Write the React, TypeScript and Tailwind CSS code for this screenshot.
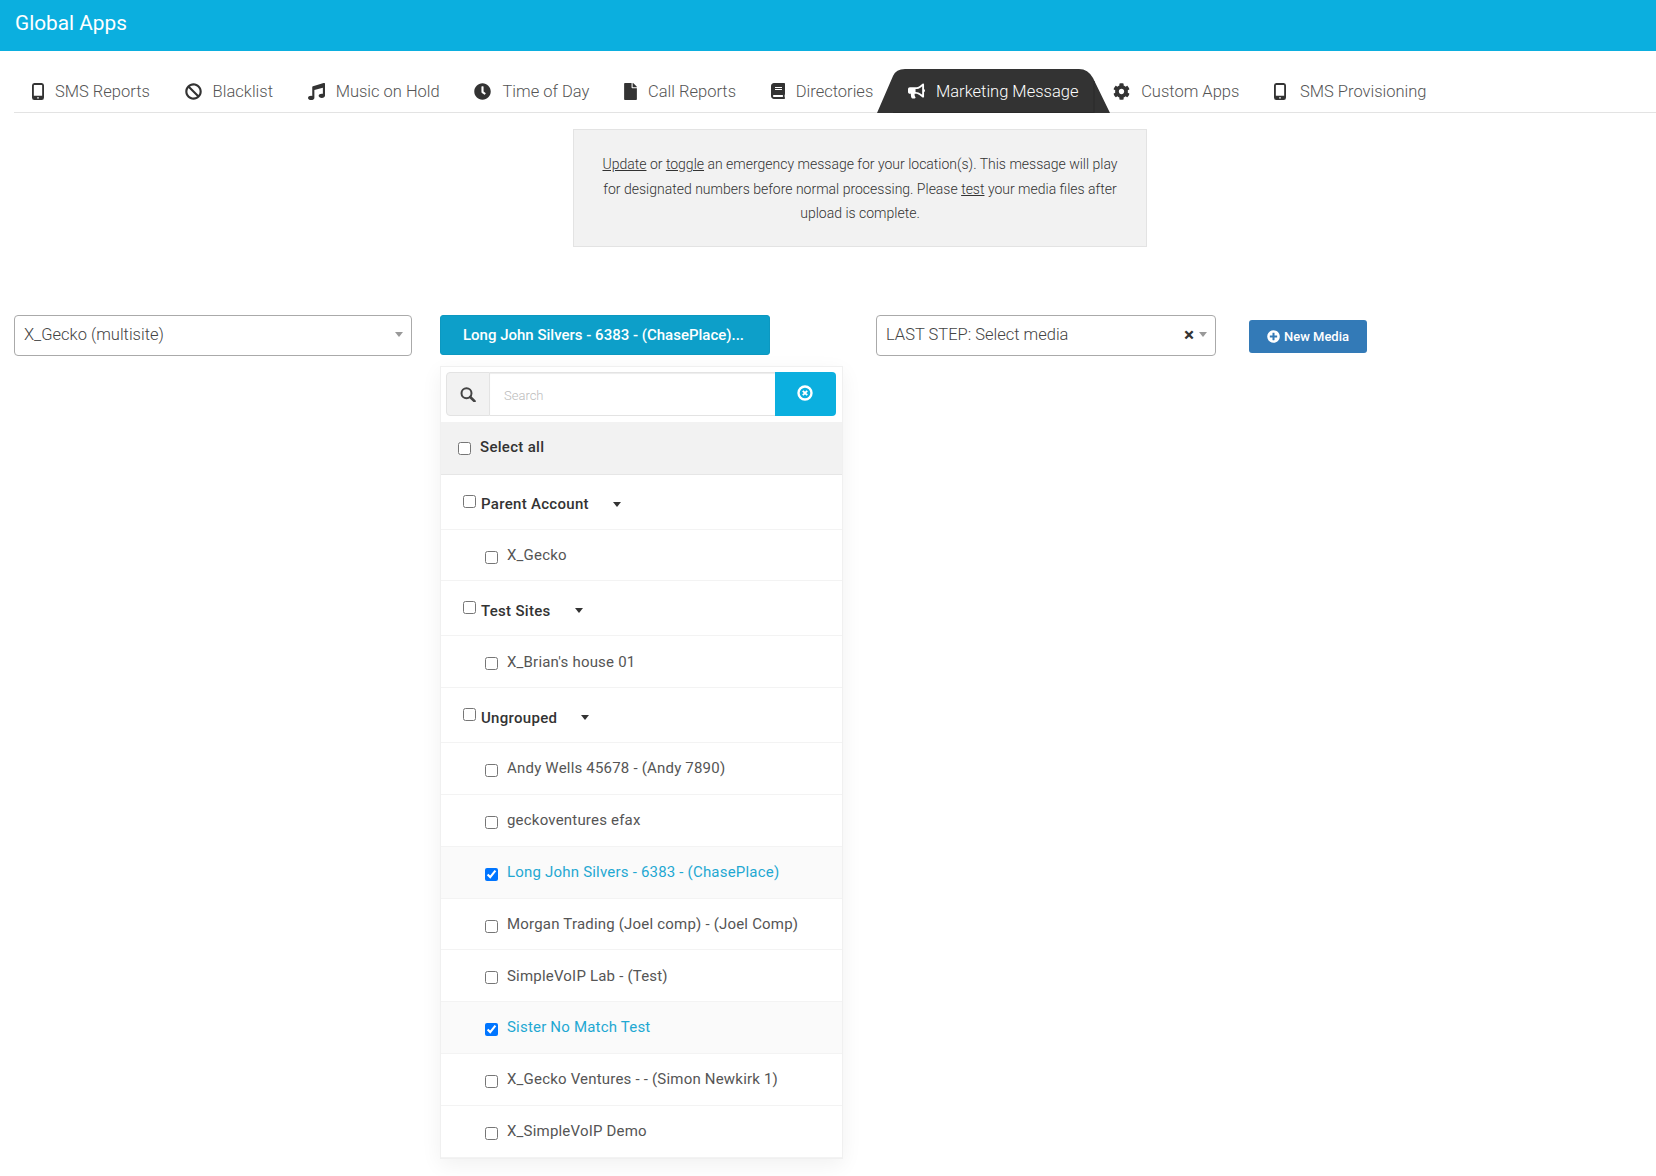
import React from 'react';
import { FaBan, FaMusic, FaClock, FaFile, FaBook, FaBullhorn, FaCog, FaPlusCircle } from 'react-icons/fa';

const MobileIcon = () => (
  <svg viewBox="0 0 13 17" className="w-[12px] h-[17px]" fill="currentColor" preserveAspectRatio="none">
    <path fillRule="evenodd" d="M2.5 0h8A2.5 2.5 0 0 1 13 2.500v12a2.500 2.500 0 0 1-2.500 2.500h-8A2.500 2.500 0 0 1 0 14.500v-12A2.500 2.500 0 0 1 2.500 0zM2 2.500v10.300h9V2.500a.5.5 0 0 0-.5-.5h-8a.5.5 0 0 0-.5.5z" />
    <circle cx="6.500" cy="14.800" r="0.900" fill="#fff" />
  </svg>
);

const SearchIcon = () => (
  <svg viewBox="0 0 16 15" className="w-[16px] h-[15px]" fill="none" stroke="currentColor">
    <circle cx="6.500" cy="6.300" r="5" strokeWidth="2" />
    <path d="M10.200 10l4.300 4.200" strokeWidth="2.600" strokeLinecap="round" />
  </svg>
);

const ClearIcon = () => (
  <svg viewBox="0 0 16 16" className="w-[16px] h-[16px]" fill="none" stroke="currentColor">
    <circle cx="8" cy="8" r="6.500" strokeWidth="2.400" />
    <path d="M5.800 5.800l4.400 4.400M10.200 5.800l-4.400 4.400" strokeWidth="1.900" />
  </svg>
);

const tabs = [
  { label: 'SMS Reports', icon: <MobileIcon /> },
  { label: 'Blacklist', icon: <FaBan className="w-[17px] h-[17px]" /> },
  { label: 'Music on Hold', icon: <FaMusic className="w-[17px] h-[17px]" /> },
  { label: 'Time of Day', icon: <FaClock className="w-[17px] h-[17px]" /> },
  { label: 'Call Reports', icon: <FaFile className="w-[13px] h-[17px]" /> },
  { label: 'Directories', icon: <FaBook className="w-[14px] h-[16px]" /> },
  { label: 'Marketing Message', icon: <FaBullhorn className="w-[17px] h-[16px]" />, active: true },
  { label: 'Custom Apps', icon: <FaCog className="w-[17px] h-[17px]" /> },
  { label: 'SMS Provisioning', icon: <MobileIcon />, wide: true },
];

const Caret = ({ className = '' }: { className?: string }) => (
  <span className={`inline-block w-0 h-0 border-x-[4px] border-x-transparent border-t-[5px] ${className}`} />
);

const Row = ({ label, checked }: { label: string; checked?: boolean }) => (
  <div className={`h-[51.8px] flex items-center pl-[44px] border-b border-[#f3f3f3] ${checked ? 'bg-[#fafafa] text-[#1fa8d2]' : 'text-[#555]'}`}>
    <input type="checkbox" checked={!!checked} readOnly className="mt-[4px]" />
    <span className="ml-[9px] text-[15px] tracking-[0.2px]">{label}</span>
  </div>
);

const Group = ({ label }: { label: string }) => (
  <div className="h-[55px] flex items-center pl-[22px] border-b border-[#f3f3f3] text-[#333]">
    <input type="checkbox" readOnly className="-mt-[1px]" />
    <span className="ml-[5px] mt-[5px] text-[15px] font-medium tracking-[0.3px]">{label}</span>
    <Caret className="border-t-[#333] mt-[5px] ml-[24px]" />
  </div>
);

export default function App() {
  return (
    <div className="min-h-[1176px] bg-white font-['Roboto',sans-serif] text-[#555] overflow-hidden">
      <header className="h-[51px] bg-[#0bafdf] flex items-start pl-[15px] pt-[9px]">
        <span className="text-[20.8px] text-white leading-[28px] font-normal">Global Apps</span>
      </header>

      <nav className="ml-[14px] mt-[18px] h-[44px] border-b border-[#e3e3e3] flex items-start pl-[18px] gap-[34.7px]">
        {tabs.map(t => (
          <div key={t.label} className={`relative h-[43px] pt-[1px] flex items-center text-[16.5px] font-light ${t.wide ? 'gap-[14px]' : 'gap-[11px]'} ${t.active ? 'text-white' : 'text-[#555]'}`}>
            {t.active && (
              <svg className="absolute top-0 -left-[32px] h-[44px] w-[234px]" viewBox="0 0 234 44">
                <path d="M1 44 L17 7 Q20 0 29 0 L203 0 Q212 0 217 9 L234 44 Z" fill="#333" />
                <path d="M17 43.500H218M218 12V44" stroke="#2a2a2a" strokeWidth="1" fill="none" />
              </svg>
            )}
            <span className={`relative ${t.active ? 'text-white' : 'text-[#333]'}`}>{t.icon}</span>
            <span className="relative mt-[2px]">{t.label}</span>
          </div>
        ))}
      </nav>

      <div className="ml-[573px] mt-[16px] w-[574px] h-[118px] bg-[#f2f2f2] border border-[#e3e3e3] flex items-center justify-center text-center px-[21px] pt-[2px] text-[14px] leading-[24.5px] font-light text-[#333]">
        <p>
          <u>Update</u> or <u>toggle</u> an emergency message for your location(s). This message will play for designated numbers before normal processing. Please <u>test</u> your media files after upload is complete.
        </p>
      </div>

      <div className="mt-[68px] ml-[14px] flex items-start">
        <div className="w-[398px] h-[41px] border border-[#aaa] rounded-[4px] flex items-center pl-[9px] pr-[8px] text-[16.5px] font-light text-[#444]">
          <span className="flex-1">X_Gecko (multisite)</span>
          <Caret className="border-t-[#999] -mt-[2px]" />
        </div>

        <div className="ml-[28px] w-[403px]">
          <div className="w-[330px] h-[40px] bg-[#0d9fc9] border border-[#0c98c0] rounded-[3px] flex items-center justify-center pr-[3px] text-white text-[15px] font-medium">
            Long John Silvers - 6383 - (ChasePlace)...
          </div>
          <div className="mt-[11px] bg-white border border-[#f0f0f0] shadow-[0_6px_20px_rgba(0,0,0,0.06)]">
            <div className="pt-[5px] pl-[5px] pr-[6px] pb-[6px]">
              <div className="flex h-[44px]">
                <div className="w-[44px] bg-[#f2f2f2] border border-[#e3e3e3] rounded-l-[4px] flex items-center justify-center text-[#444]">
                  <SearchIcon />
                </div>
                <div className="flex-1 flex items-center pl-[14px] pt-[3px] border-y border-[#e3e3e3] shadow-[inset_0_1px_1px_rgba(0,0,0,0.075)] text-[13px] font-light text-[#bbb]">Search</div>
                <div className="w-[61px] bg-[#0bafdf] rounded-r-[4px] flex justify-center pt-[13px] pr-[2px] text-white">
                  <ClearIcon />
                </div>
              </div>
            </div>
            <div className="h-[52.7px] bg-[#f2f2f2] border-b border-[#e6e6e6] flex items-center pl-[17px] text-[#333]">
              <input type="checkbox" readOnly className="mt-[1px]" />
              <span className="ml-[9px] -mt-[1px] text-[15px] font-medium tracking-[0.3px]">Select all</span>
            </div>
            <Group label="Parent Account" />
            <Row label="X_Gecko" />
            <Group label="Test Sites" />
            <Row label="X_Brian's house 01" />
            <Group label="Ungrouped" />
            <Row label="Andy Wells 45678 - (Andy 7890)" />
            <Row label="geckoventures efax" />
            <Row label="Long John Silvers - 6383 - (ChasePlace)" checked />
            <Row label="Morgan Trading (Joel comp) - (Joel Comp)" />
            <Row label="SimpleVoIP Lab - (Test)" />
            <Row label="Sister No Match Test" checked />
            <Row label="X_Gecko Ventures - - (Simon Newkirk 1)" />
            <Row label="X_SimpleVoIP Demo" />
          </div>
        </div>

        <div className="ml-[33px] w-[340px] h-[41px] border border-[#aaa] rounded-[4px] flex items-center pl-[9px] pr-[8px] text-[16.5px] font-light text-[#444]">
          <span className="flex-1">LAST STEP: Select media</span>
          <span className="text-[19px] leading-none font-bold text-[#333] mr-[5px] -mt-[2px]">×</span>
          <Caret className="border-t-[#999] -mt-[2px]" />
        </div>

        <div className="ml-[33px] mt-[5px] w-[118px] h-[33px] bg-[#337ab7] rounded-[3px] flex items-center justify-center gap-[4px] text-white text-[13px] font-medium">
          <FaPlusCircle className="w-[13px] h-[13px]" />
          New Media
        </div>
      </div>
    </div>
  );
}
